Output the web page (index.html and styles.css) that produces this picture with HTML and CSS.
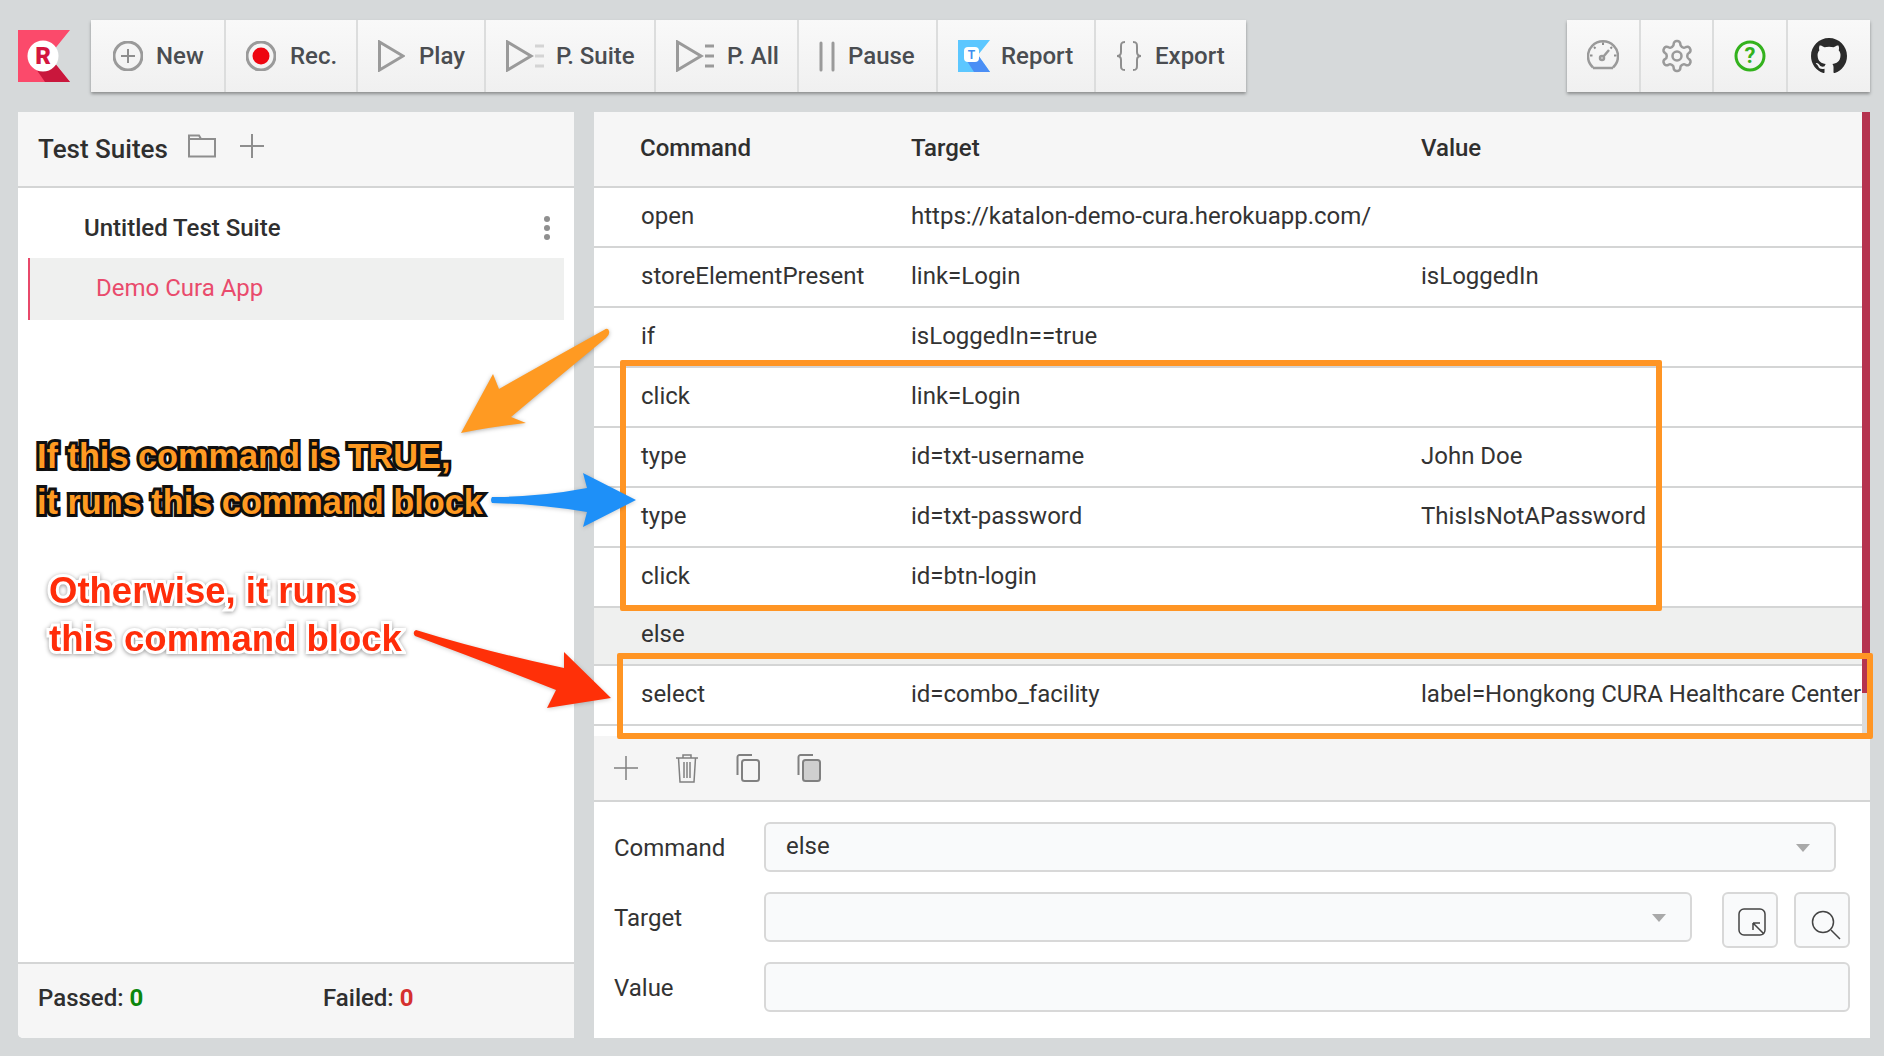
FILE: index.html
```html
<!DOCTYPE html>
<html lang="en">
<head>
<meta charset="utf-8">
<title>Katalon Recorder</title>
<link rel="stylesheet" href="styles.css">
</head>
<body>
<div class="app">
  <header class="topbar">
    <svg class="logo" viewBox="0 0 52 52" width="52" height="52">
      <polygon points="0,0 52,0 31,26 52,52 0,52" fill="#fb4a6b"/>
      <polygon points="16,36 31,26 52,52 27,52" fill="#c9173c"/>
      <circle cx="25" cy="26" r="15.5" fill="#fff"/>
      <text x="25" y="33.5" class="logo-r">R</text>
    </svg>
    <nav class="tools">
      <div class="tool tool-new">
        <svg class="ico" width="30" height="30" viewBox="0 0 30 30"><circle cx="15" cy="15" r="14" class="ln"/><path d="M15 8v14M8 15h14" class="ln-thin"/></svg>
        <span>New</span>
      </div>
      <div class="tool tool-rec">
        <svg class="ico" width="30" height="30" viewBox="0 0 30 30"><circle cx="15" cy="15" r="14" class="ln"/><circle cx="15" cy="15" r="8.5" fill="#ee0510"/></svg>
        <span>Rec.</span>
      </div>
      <div class="tool tool-play">
        <svg class="ico" width="27" height="32" viewBox="0 0 27 32"><path d="M1.5 2v28L25 16z" class="ln"/></svg>
        <span>Play</span>
      </div>
      <div class="tool tool-suite">
        <svg class="ico" width="38" height="32" viewBox="0 0 38 32"><path d="M1.5 2v28L25 16z" class="ln"/><path d="M29 6h9M29 16h9M29 26h9" class="ln ln-light"/></svg>
        <span>P. Suite</span>
      </div>
      <div class="tool tool-all">
        <svg class="ico" width="38" height="32" viewBox="0 0 38 32"><path d="M1.5 2v28L25 16z" class="ln"/><path d="M29 6h9M29 16h9M29 26h9" class="ln"/></svg>
        <span>P. All</span>
      </div>
      <div class="tool tool-pause">
        <svg class="ico" width="16" height="32" viewBox="0 0 16 32"><path d="M2 3v27M14 3v27" class="ln ln-round"/></svg>
        <span>Pause</span>
      </div>
      <div class="tool tool-report">
        <svg class="ico" width="32" height="32" viewBox="0 0 32 32">
          <polygon points="0,0 32,0 20,15 32,32 0,32" fill="#5cc7ff"/>
          <polygon points="9,21 20,15 32,32 16,32" fill="#4b8ef5"/>
          <rect x="6" y="7" width="15" height="15" rx="4" fill="#fff"/>
          <text x="13.5" y="19" class="report-t">T</text>
        </svg>
        <span>Report</span>
      </div>
      <div class="tool tool-export">
        <svg class="ico" width="26" height="32" viewBox="0 0 26 32"><path d="M9 2C5 2 5 4 5 7v5c0 3-1 4-4 4 3 0 4 1 4 4v5c0 3 0 5 4 5M17 2c4 0 4 2 4 5v5c0 3 1 4 4 4-3 0-4 1-4 4v5c0 3 0 5-4 5" class="ln-thin"/></svg>
        <span>Export</span>
      </div>
    </nav>
    <nav class="tools tools-right">
      <div class="tool tool-icon tool-speed">
        <svg width="32" height="32" viewBox="0 0 32 32"><path d="M6 27.5A15 15 0 1 1 26 27.5" class="ln ln-2"/><path d="M6 28h20" class="ln ln-2"/><path d="M16 2.5v2.5M3 15.500h2.500M27 15.500h2.500M7 7l1.500 1.500M25 7l-1.500 1.500" class="ln-thin"/><circle cx="15" cy="18" r="2" class="ln ln-2"/><path d="M16.500 16.500L22 10" class="ln ln-2"/></svg>
      </div>
      <div class="tool tool-icon tool-gear">
        <svg width="36" height="36" viewBox="0 0 24 24"><path d="M12.220 2h-.44a2 2 0 0 0-2 2v.18a2 2 0 0 1-1 1.730l-.43.25a2 2 0 0 1-2 0l-.15-.08a2 2 0 0 0-2.730.73l-.22.38a2 2 0 0 0 .73 2.730l.15.1a2 2 0 0 1 1 1.720v.51a2 2 0 0 1-1 1.740l-.15.09a2 2 0 0 0-.73 2.730l.22.38a2 2 0 0 0 2.730.73l.15-.08a2 2 0 0 1 2 0l.43.25a2 2 0 0 1 1 1.730V20a2 2 0 0 0 2 2h.44a2 2 0 0 0 2-2v-.18a2 2 0 0 1 1-1.730l.43-.25a2 2 0 0 1 2 0l.15.08a2 2 0 0 0 2.730-.73l.22-.39a2 2 0 0 0-.73-2.730l-.15-.08a2 2 0 0 1-1-1.740v-.5a2 2 0 0 1 1-1.740l.15-.09a2 2 0 0 0 .73-2.730l-.22-.38a2 2 0 0 0-2.730-.73l-.15.08a2 2 0 0 1-2 0l-.43-.25a2 2 0 0 1-1-1.730V4a2 2 0 0 0-2-2z" class="gear"/><circle cx="12" cy="12" r="3" class="gear"/></svg>
      </div>
      <div class="tool tool-icon tool-help">
        <svg width="32" height="32" viewBox="0 0 32 32"><circle cx="16" cy="16" r="14" class="help"/><text x="16" y="23" class="help-q">?</text></svg>
      </div>
      <div class="tool tool-icon tool-github">
        <svg width="36" height="36" viewBox="0 0 16 16"><path fill="#2b2b2b" d="M8 0C3.58 0 0 3.58 0 8c0 3.54 2.29 6.53 5.47 7.59.4.07.55-.17.55-.38 0-.19-.01-.82-.01-1.49-2.01.37-2.53-.49-2.69-.94-.09-.23-.48-.94-.82-1.130-.28-.15-.68-.52-.01-.53.63-.01 1.080.58 1.230.82.72 1.210 1.870.87 2.330.66.07-.52.28-.87.51-1.070-1.780-.2-3.640-.89-3.640-3.950 0-.87.31-1.590.82-2.150-.08-.2-.36-1.020.08-2.120 0 0 .67-.21 2.200.82.64-.18 1.320-.27 2-.27.68 0 1.360.09 2 .27 1.530-1.040 2.200-.82 2.200-.82.44 1.100.16 1.920.08 2.120.51.56.82 1.270.82 2.150 0 3.070-1.870 3.750-3.650 3.950.29.25.54.73.54 1.480 0 1.070-.01 1.930-.01 2.200 0 .21.15.46.55.38A8.013 8.013 0 0016 8c0-4.420-3.580-8-8-8z"/></svg>
      </div>
    </nav>
  </header>

  <main class="main">
    <aside class="suites">
      <div class="suites-head">
        <span class="suites-title">Test Suites</span>
        <svg class="head-ico" width="28" height="24" viewBox="0 0 28 24"><path d="M1 22.500V1.500h10l2 3.500h14v17.500z" class="ln-thin"/><path d="M1 5h12" class="ln-thin"/></svg>
        <svg class="head-ico head-plus" width="24" height="24" viewBox="0 0 24 24"><path d="M12 0v24M0 12h24" class="ln-thin"/></svg>
      </div>
      <div class="suites-list">
        <div class="suite-row">
          <span class="suite-name">Untitled Test Suite</span>
          <svg width="6" height="24" viewBox="0 0 6 24"><circle cx="3" cy="3" r="3" fill="#8f8f8f"/><circle cx="3" cy="12" r="3" fill="#8f8f8f"/><circle cx="3" cy="21" r="3" fill="#8f8f8f"/></svg>
        </div>
        <div class="case-row">Demo Cura App</div>
      </div>
      <div class="suites-foot">
        <span class="stat stat-pass">Passed: <b>0</b></span>
        <span class="stat stat-fail">Failed: <b>0</b></span>
      </div>
    </aside>

    <section class="editor">
      <div class="table-wrap">
        <div class="table">
          <div class="row row-head"><div>Command</div><div>Target</div><div>Value</div></div>
          <div class="row"><div>open</div><div>https://katalon-demo-cura.herokuapp.com/</div><div></div></div>
          <div class="row"><div>storeElementPresent</div><div>link=Login</div><div>isLoggedIn</div></div>
          <div class="row"><div>if</div><div>isLoggedIn==true</div><div></div></div>
          <div class="row"><div>click</div><div>link=Login</div><div></div></div>
          <div class="row"><div>type</div><div>id=txt-username</div><div>John Doe</div></div>
          <div class="row"><div>type</div><div>id=txt-password</div><div>ThisIsNotAPassword</div></div>
          <div class="row"><div>click</div><div>id=btn-login</div><div></div></div>
          <div class="row row-else"><div>else</div><div></div><div></div></div>
          <div class="row"><div>select</div><div>id=combo_facility</div><div>label=Hongkong CURA Healthcare Center</div></div>
        </div>
        <div class="scroll"><div class="scroll-thumb"></div></div>
      </div>

      <div class="actions">
        <svg width="24" height="24" viewBox="0 0 24 24"><path d="M12 0v24M0 12h24" class="ac"/></svg>
        <svg width="24" height="30" viewBox="0 0 24 30"><path d="M1 5h22M8 5V2h8v3M3.500 5l1.500 24h14l1.500-24M9 9v16M12 9v16M15 9v16" class="ac"/></svg>
        <svg width="24" height="28" viewBox="0 0 24 28"><path d="M1.500 21V3a2 2 0 0 1 2-2H16" class="ac ac-2"/><rect x="6" y="6" width="17" height="21" rx="2.500" class="ac ac-2"/></svg>
        <svg width="24" height="28" viewBox="0 0 24 28"><path d="M1.500 21V3a2 2 0 0 1 2-2H16" class="ac ac-2"/><rect x="6" y="6" width="17" height="21" rx="2.500" class="ac ac-2 ac-fill"/></svg>
      </div>

      <form class="form">
        <div class="field">
          <label class="field-label">Command</label>
          <div class="input input-command">else<i class="caret"></i></div>
        </div>
        <div class="field">
          <label class="field-label">Target</label>
          <div class="input input-target"><i class="caret"></i></div>
          <div class="square square-first">
            <svg width="28" height="28" viewBox="0 0 28 28"><rect x="1" y="1" width="26" height="26" rx="5" class="sq"/><path d="M15 15l11 11M15 15h7M15 15v7" class="sq"/></svg>
          </div>
          <div class="square square-search">
            <svg width="30" height="30" viewBox="0 0 30 30"><circle cx="12" cy="12" r="10.500" class="sq"/><path d="M20 20l9 9" class="sq"/></svg>
          </div>
        </div>
        <div class="field">
          <label class="field-label">Value</label>
          <div class="input input-value"></div>
        </div>
      </form>
    </section>
  </main>
</div>

<div class="overlay">
  <div class="box box-true"></div>
  <div class="box box-else"></div>
  <svg class="arrows" width="1884" height="1056" viewBox="0 0 1884 1056">
    <path class="ar-orange" d="M609 331Q610 335 606 338Q555 380 511 417L526 423Q490 427 461 433L493 374L499 389Q550 360 604 330Q608 327 609 331z"/>
    <path class="ar-blue" d="M492 497Q540 497 587 488L583 473L636 500L583 527L587 512Q540 504 492 503Q490 500 492 497z"/>
    <path class="ar-red" d="M416 630Q480 650 564 668L564 652L611 698L547 708L556 690Q480 660 415 636Q412 632 416 630z"/>
  </svg>
  <p class="note note-true">If this command is TRUE,<br>it runs this command block</p>
  <p class="note note-else">Otherwise, it runs<br>this command block</p>
</div>
</body>
</html>
```

FILE: styles.css
```css
* { box-sizing: border-box; }
html, body { margin: 0; height: 1056px; overflow: hidden; }
body {
  background: #d6d9da;
  font-family: Roboto, "Liberation Sans", sans-serif;
  font-size: 24px;
  color: #333;
  position: relative;
}
.app { padding: 20px 14px 18px 18px; }

/* top bar */
.topbar { display: flex; height: 72px; align-items: flex-start; }
.logo { margin-top: 10px; margin-right: 21px; flex: none; }
.logo-r { font: 900 24px Roboto, sans-serif; fill: #d3163f; text-anchor: middle; }
.report-t { font: 700 12px Roboto, sans-serif; fill: #3f8ff0; text-anchor: middle; }
.tools {
  display: flex;
  height: 72px;
  background: linear-gradient(#f9f9f9, #f0f0f0);
  box-shadow: 0 2px 3px rgba(0,0,0,.35);
}
.tools-right { margin-left: auto; }
.tool {
  display: flex;
  align-items: center;
  border-left: 2px solid #dcdddd;
  font-weight: 500;
  color: #4a4d51;
  padding-left: 20px;
  gap: 13px;
}
.tool:first-child { border-left: 0; padding-left: 22px; }
.tool-new { width: 133px; }
.tool-rec { width: 132px; gap: 14px; }
.tool-play { width: 128px; gap: 14px; }
.tool-suite { width: 170px; gap: 12px; }
.tool-all { width: 143px; }
.tool-pause { width: 139px; }
.tool-report { width: 158px; gap: 11px; }
.tool-export { width: 152px; gap: 13px; }
.tools-right .tool-icon { padding: 0; justify-content: center; }
.tool-speed { width: 72px; }
.tool-gear { width: 73px; }
.tool-help { width: 74px; }
.tool-github { width: 84px; }
.ln { fill: none; stroke: #9a9a9a; stroke-width: 3; }
.ln-2 { stroke-width: 2.5; }
.ln-light { stroke: #d4d4d4; }
.ln-round { stroke-linecap: round; }
.ln-thin { fill: none; stroke: #8e8e8e; stroke-width: 2; }
.gear { fill: none; stroke: #9a9a9a; stroke-width: 1.700; }
.help { fill: none; stroke: #33b21d; stroke-width: 3; }
.help-q { font: 700 22px Roboto, sans-serif; fill: #33b21d; text-anchor: middle; }

/* main */
.main { display: flex; gap: 20px; margin-top: 20px; height: 926px; }

.suites {
  width: 556px;
  background: #fff;
  display: flex;
  flex-direction: column;
  border-radius: 0 0 0 5px;
  overflow: hidden;
}
.suites-head {
  height: 76px;
  flex: none;
  background: #f6f6f6;
  border-bottom: 2px solid #d4d5d5;
  display: flex;
  align-items: center;
  padding: 0 0 6px 20px;
}
.suites-title { font-weight: 500; font-size: 26px; position: relative; top: 3px; color: #2f2f2f; }
.head-ico { margin-left: 20px; flex: none; }
.head-plus { margin-left: 24px; }
.suites-list { flex: 1; padding: 10px 10px 0 10px; }
.suite-row {
  height: 60px;
  display: flex;
  align-items: center;
  justify-content: space-between;
  padding: 0 14px 0 56px;
  font-weight: 500;
  color: #2f2f2f;
}
.case-row {
  height: 62px;
  display: flex;
  align-items: center;
  background: #eff0ef;
  border-left: 2px solid #e8486a;
  padding: 0 0 2px 66px;
  color: #e94b6c;
}
.suites-foot {
  height: 76px;
  flex: none;
  background: #f6f6f6;
  border-top: 2px solid #d4d5d5;
  display: flex;
  align-items: center;
  padding: 0 0 6px 20px;
  font-weight: 500;
  color: #2f2f2f;
}
.stat b { font-weight: 700; }
.stat-pass { width: 285px; }
.stat-pass b { color: #0c860c; }
.stat-fail b { color: #d5302f; }

/* editor */
.editor { width: 1276px; background: #fff; display: flex; flex-direction: column; }
.table-wrap { display: flex; height: 624px; flex: none; }
.table { flex: 1; }
.row {
  display: grid;
  grid-template-columns: 317px 510px 1fr;
  height: 60px;
  align-items: center;
  border-bottom: 2px solid #d4d5d5;
  padding-bottom: 2px;
  white-space: nowrap;
}
.row > div:first-child { padding-left: 47px; }
.row-head {
  height: 76px;
  background: #f6f6f6;
  font-weight: 500;
  color: #2f2f2f;
  padding-bottom: 2px;
}
.row-head > div:first-child { padding-left: 46px; }
.row-else { background: #eff0ef; height: 58px; padding-bottom: 4px; }
.scroll { width: 8px; background: #dcdcdc; }
.scroll-thumb { height: 581px; background: #b5334f; }

.actions {
  height: 66px;
  flex: none;
  background: #f5f5f5;
  border-bottom: 2px solid #d4d5d5;
  display: flex;
  align-items: center;
  gap: 37px;
  padding-left: 20px;
}
.ac { fill: none; stroke: #808080; stroke-width: 1.500; }
.ac-2 { stroke-width: 2; }
.ac-fill { fill: #cfcfcf; }

.form { padding: 20px 20px 0; display: flex; flex-direction: column; gap: 20px; }
.field { display: flex; height: 50px; align-items: flex-start; }
.field-label { width: 150px; flex: none; line-height: 52px; color: #333; }
.input {
  height: 50px;
  background: #f9fafb;
  border: 2px solid #d8d8d8;
  border-radius: 6px;
  position: relative;
  padding-left: 20px;
  line-height: 44px;
}
.input-command { width: 1072px; }
.input-target { width: 928px; }
.input-value { flex: 1; }
.caret {
  position: absolute;
  right: 24px;
  top: 20px;
  border-style: solid;
  border-width: 8px 7px 0;
  border-color: #a9a9a9 transparent transparent;
}
.square {
  width: 56px;
  height: 56px;
  flex: none;
  margin-left: 16px;
  background: #f9fafb;
  border: 2px solid #d8d8d8;
  border-radius: 6px;
  display: flex;
  align-items: center;
  justify-content: center;
}
.square-first { margin-left: 30px; padding: 4px 0 0 4px; }
.square-search { padding: 9px 0 0 8px; }
.sq { fill: none; stroke: #444; stroke-width: 1.500; }

/* annotations */
.overlay { position: absolute; inset: 0; pointer-events: none; }
.arrows { position: absolute; left: 0; top: 0; }
.ar-orange { fill: #ff9a22; filter: drop-shadow(0 1px 2px rgba(0,0,0,.3)); }
.ar-blue { fill: #1e90f8; filter: drop-shadow(0 1px 2px rgba(0,0,0,.2)); }
.ar-red { fill: #ff3008; filter: drop-shadow(0 1px 2px rgba(0,0,0,.2)); }
.box { position: absolute; border: 6px solid #ff9524; border-radius: 2px; }
.box-true { left: 620px; top: 360px; width: 1042px; height: 251px; }
.box-else { left: 617px; top: 653px; width: 1256px; height: 86px; }
.note {
  position: absolute;
  margin: 0;
  font-family: "Liberation Sans", Arial, sans-serif;
  font-weight: 700;
  white-space: nowrap;
  paint-order: stroke fill;
}
.note-true {
  left: 37px;
  top: 434px;
  font-size: 34.300px;
  line-height: 45.500px;
  color: #ff9a22;
  -webkit-text-stroke: 6px #111;
  text-shadow: 0 2px 2px rgba(0,0,0,.5);
}
.note-else {
  left: 49px;
  top: 567px;
  font-size: 36.500px;
  line-height: 48px;
  color: #ff2d0a;
  -webkit-text-stroke: 6px #fff;
  filter: drop-shadow(0 1px 2px rgba(0,0,0,.4));
}
```
